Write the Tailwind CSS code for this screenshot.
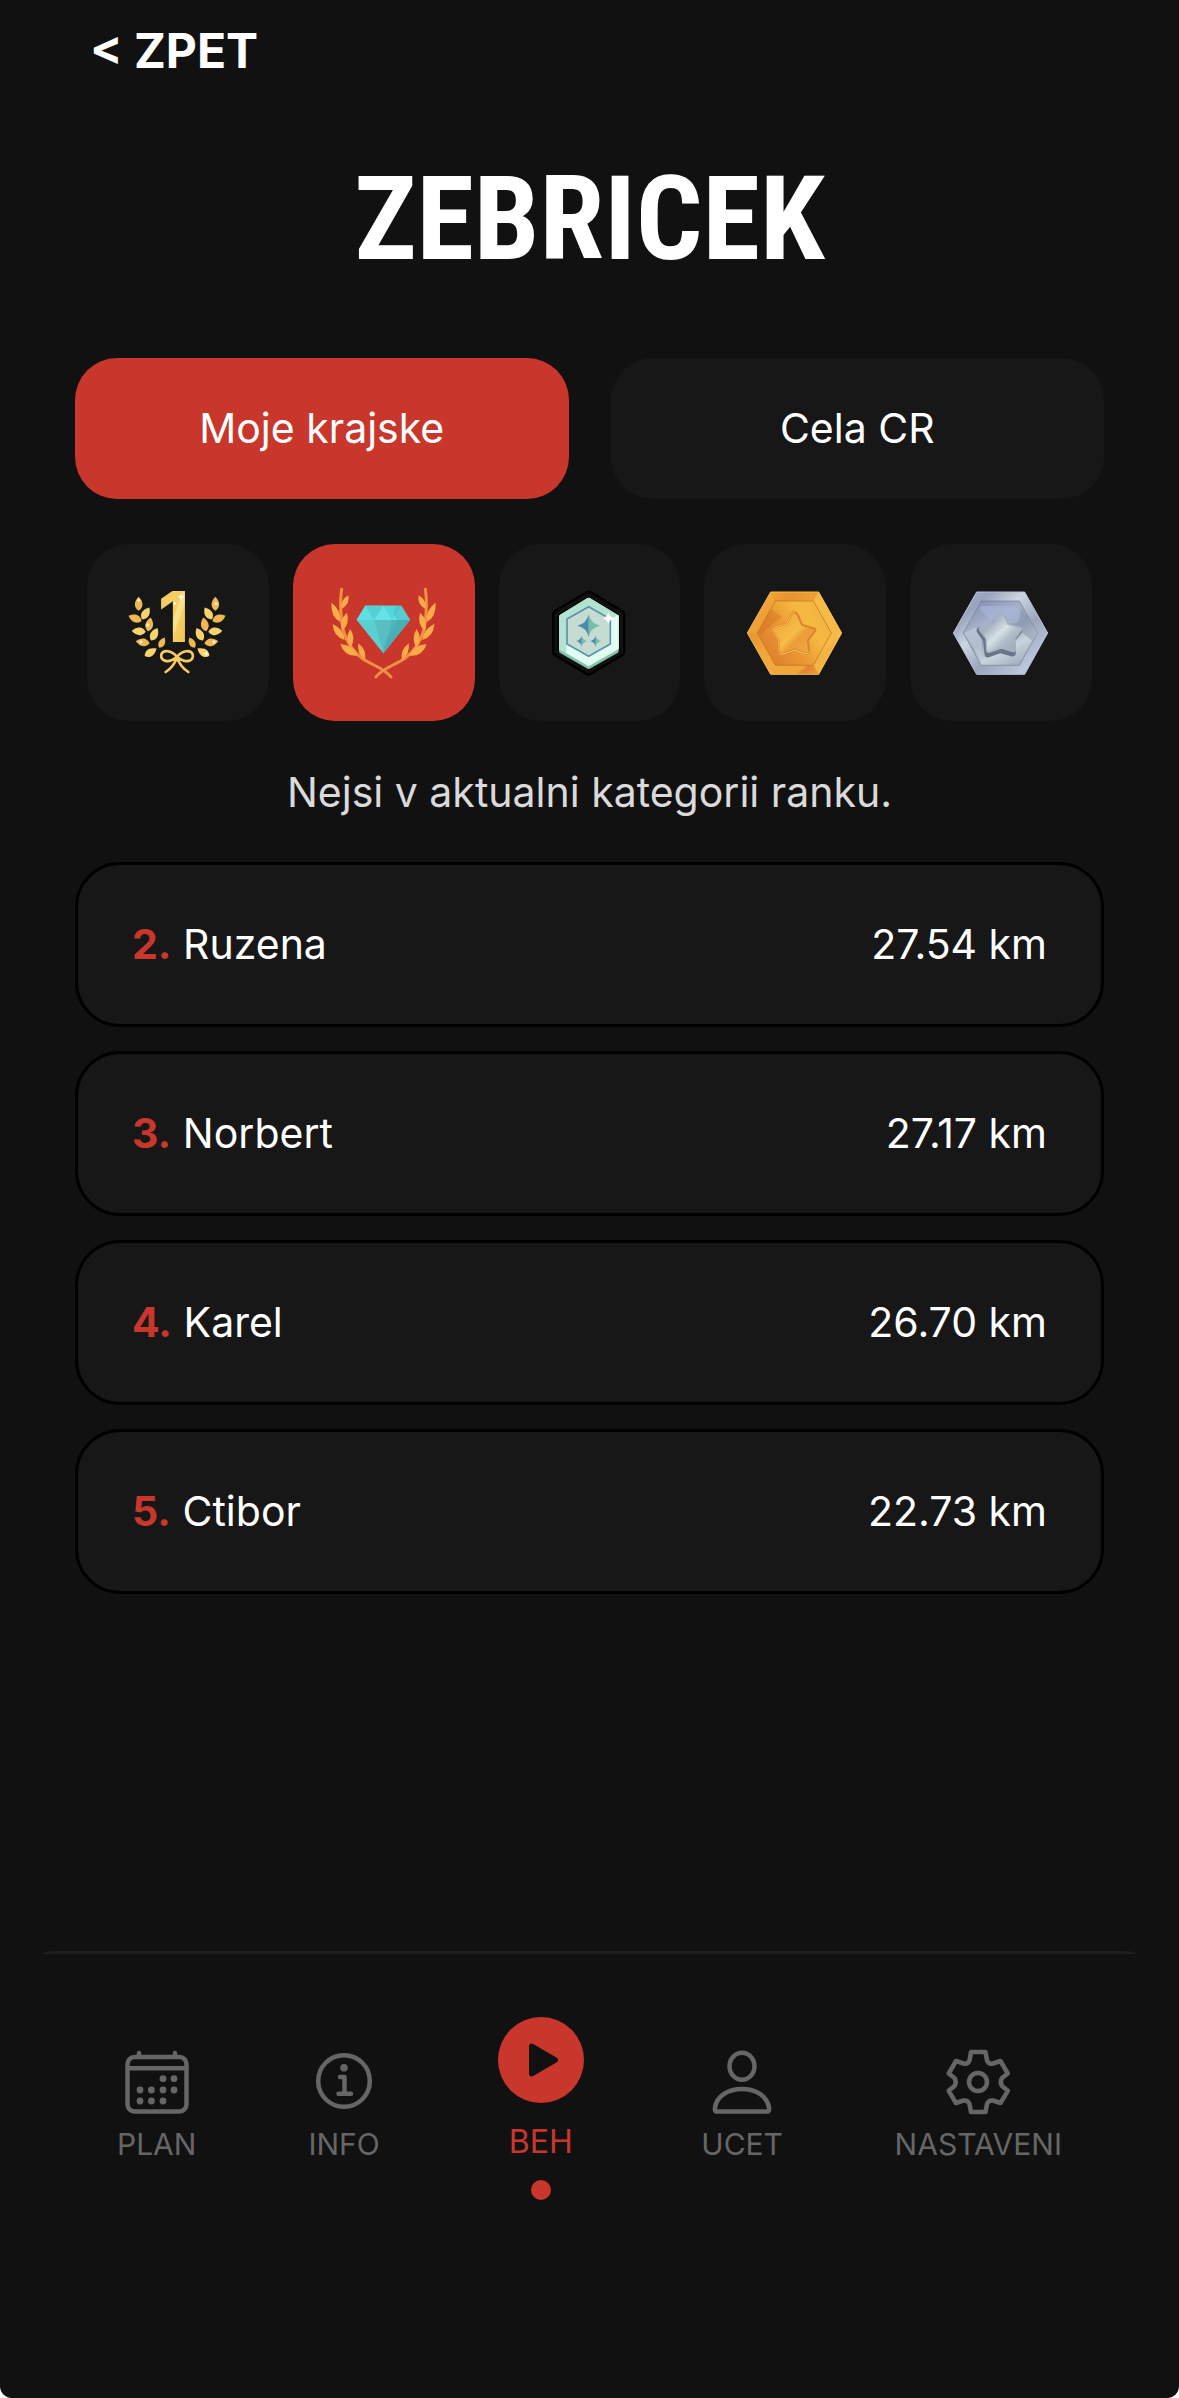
<!DOCTYPE html>
<html lang="cs">
<head>
<meta charset="utf-8">
<meta name="viewport" content="width=device-width, initial-scale=1">
<title>Zebricek</title>
<script src="https://cdn.jsdelivr.net/npm/@tailwindcss/browser@4"></script>
</head>
<body class="bg-white">
<div class="flex min-h-screen flex-col rounded-b-[12px] bg-[#111111] font-['Inter',sans-serif] text-[41px] text-white">

  <header class="flex px-[90px] pt-5">
    <a href="#" class="text-[48px] leading-[62px] font-bold">&lt; ZPET</a>
  </header>

  <main class="px-[75px]">
    <h1 class="mt-[77px] text-center font-['Roboto_Condensed','Liberation_Sans_Narrow','Liberation_Sans',sans-serif] text-[117px] leading-[120px] font-bold">ZEBRICEK</h1>

    <div class="mt-[79px] grid grid-cols-2 gap-[42px]">
      <button class="h-[141px] rounded-[42px] bg-[#c9372c]">Moje krajske</button>
      <button class="h-[141px] rounded-[42px] bg-[#171717]">Cela CR</button>
    </div>

    <div class="mt-[45px] grid grid-cols-5 gap-6 px-3">
      <button aria-label="Prvni misto" class="flex h-[177px] items-center justify-center rounded-[42px] bg-[#171717]">
        <svg class="size-[120px]" viewBox="54 37 360 360">
          <defs>
            <linearGradient id="one" x1="0" y1="0" x2="1" y2="1"><stop offset="0" stop-color="#f6c858"/><stop offset=".5" stop-color="#f5cf63"/><stop offset=".52" stop-color="#fbe08a"/><stop offset=".6" stop-color="#fbe08a"/><stop offset=".62" stop-color="#f5cf5c"/><stop offset="1" stop-color="#f0b850"/></linearGradient>
            <path id="leaf" d="M0-21C9-12 13-2 11 7C9 14 4 19 0 21C-4 19-9 14-11 7C-13-2-9-12 0-21Z"/>
            <path id="spark" d="M0-11Q1-1 11 0Q1 1 0 11Q-1 1-11 0Q-1-1 0-11Z" fill="#fff"/>
            <g id="twig">
              <use href="#leaf" fill="#f0b94f" transform="translate(116 129)"/>
              <use href="#leaf" fill="#f7d46b" transform="translate(137 158) rotate(32)"/>
              <use href="#leaf" fill="#f0b94f" transform="translate(105 173) rotate(-68)"/>
              <use href="#leaf" fill="#f0b94f" transform="translate(148 191) rotate(12)"/>
              <use href="#leaf" fill="#f7d46b" transform="translate(116 212) rotate(-86)"/>
              <use href="#leaf" fill="#f7d46b" transform="translate(163 221) rotate(27)"/>
              <use href="#leaf" fill="#f0b94f" transform="translate(128 245) rotate(-82)"/>
              <use href="#leaf" fill="#f0b94f" transform="translate(186 246) rotate(28) scale(.82)"/>
              <use href="#leaf" fill="#f7d46b" transform="translate(152 275) rotate(58)"/>
            </g>
          </defs>
          <use href="#twig"/>
          <use href="#twig" transform="translate(462 0) scale(-1 1)"/>
          <text x="220" y="245" text-anchor="middle" font-family="Inter, sans-serif" font-weight="800" font-size="210" fill="url(#one)">1</text>
          <path d="M231 288C213 268 190 267 184 281C180 302 205 310 231 288C257 310 283 302 278 281C272 267 249 268 231 288M231 290Q222 318 197 334M231 290Q240 318 265 334" fill="none" stroke="#f6cc62" stroke-width="8" stroke-linecap="round"/>
          <use href="#spark" transform="translate(243 109)"/>
          <use href="#spark" transform="translate(224 128) scale(.6)"/>
          <use href="#spark" transform="translate(116 119) scale(.6)"/>
          <use href="#spark" transform="translate(348 129) scale(.6)"/>
          <use href="#spark" transform="translate(143 193) scale(.6)"/>
          <use href="#spark" transform="translate(123 244) scale(.6)"/>
          <use href="#spark" transform="translate(342 244) scale(.6)"/>
          <use href="#spark" transform="translate(319 279) scale(.7)"/>
        </svg>
      </button>
      <button aria-label="Diamant" class="flex h-[177px] items-center justify-center rounded-[42px] bg-[#c9372c]">
        <svg class="size-[120px]" viewBox="42 37 360 360">
          <defs>
            <g id="branch">
              <path d="M95 86C90 115 91 150 96 190C103 232 125 270 160 296C190 314 228 326 243 349" fill="none" stroke="#f18f45" stroke-width="9" stroke-linecap="round"/>
              <path d="M64 126Q94 146 91 184Q62 170 64 126ZM68 190Q102 206 104 238Q70 228 68 190ZM91 250Q132 254 144 285Q104 290 91 250ZM115 104Q121 130 95 145Q90 118 115 104ZM111 156Q121 192 96 210Q86 178 111 156ZM121 205Q139 234 122 260Q102 234 121 205ZM145 248Q171 268 165 297Q140 280 145 248Z" fill="#fbab47"/>
            </g>
          </defs>
          <use href="#branch"/>
          <use href="#branch" transform="translate(441 0) scale(-1 1)"/>
          <path d="M166 135H274L300 178L220 278L140 178Z" fill="#5ad0d2"/>
          <path d="M166 135H220L192 178H140ZM220 135L246 178H192Z" fill="#66e3e6"/>
          <path d="M166 135L192 178H140Z" fill="#5fdfe0"/>
          <path d="M166 135H220L192 178Z" fill="#55cfd3"/>
          <path d="M220 135H274L246 178Z" fill="#55d6da"/>
          <path d="M274 135L300 178H246Z" fill="#62dfe2"/>
          <path d="M192 178H246L220 278Z" fill="#58bfc1"/>
          <path d="M246 178H300L220 278Z" fill="#4fb5bb"/>
          <path d="M258 135H274L300 178L220 278L225 240L262 178L250 160Z" fill="#3aa3b0" opacity=".3"/>
        </svg>
      </button>
      <button aria-label="Platina" class="flex h-[177px] items-center justify-center rounded-[42px] bg-[#171717]">
        <svg class="size-[120px]" viewBox="29 37 360 360">
          <g stroke-linejoin="round">
            <path d="M208 107L301 162V272L208 328L115 272V162Z" fill="#000" stroke="#000" stroke-width="34"/>
            <path d="M208 107L301 162V272L208 328L115 272V162Z" fill="#111" stroke="#111" stroke-width="20"/>
            <path d="M208 113L297 166V268L208 322L119 268V166Z" fill="#000" stroke="#000" stroke-width="10"/>
            <path d="M208 118L291 168V271L208 318L126 271V168Z" fill="#86c2ab" stroke="#86c2ab" stroke-width="14"/>
            <path d="M208 118L291 168V262L208 309L126 262V168Z" fill="#b3e2d1" stroke="#b3e2d1" stroke-width="14"/>
          </g>
          <path d="M298 162V264L208 316L140 276L142 250L208 288L274 250V176Z" fill="#e2fdf1"/>
          <path d="M208 138L273 175V250L208 287L143 250V175Z" fill="#c6dbd1" stroke="#5795aa" stroke-width="5"/>
          <path d="M208 161Q214 189 242 195Q214 201 208 229Z" fill="#75bea9"/>
          <path d="M208 161Q202 189 174 195Q202 201 208 229Z" fill="#488ca9"/>
          <path d="M187 225Q190 238 204 241Q190 244 187 258ZM229 225Q232 238 246 241Q232 244 229 258Z" fill="#75bea9"/>
          <path d="M187 225Q184 238 170 241Q184 244 187 258ZM229 225Q226 238 212 241Q226 244 229 258Z" fill="#488ca9"/>
          <path d="M267 154Q271 170 286 173Q271 176 267 190Q263 176 249 173Q263 170 267 154Z" fill="#fff"/>
        </svg>
      </button>
      <button aria-label="Zlato" class="flex h-[177px] items-center justify-center rounded-[42px] bg-[#171717]">
        <svg class="size-[120px]" viewBox="45 37 360 360">
          <defs>
            <linearGradient id="goldRim" x1="0" y1="0" x2="1" y2="1"><stop offset="0" stop-color="#f4b13a"/><stop offset=".25" stop-color="#e8932f"/><stop offset=".5" stop-color="#f3a93a"/><stop offset=".75" stop-color="#f0a63a"/><stop offset=".78" stop-color="#e38431"/><stop offset="1" stop-color="#f5bb45"/></linearGradient>
            <linearGradient id="goldFace" x1="0" y1=".8" x2="1" y2=".2"><stop offset="0" stop-color="#dc7a2c"/><stop offset=".4" stop-color="#ea9733"/><stop offset=".7" stop-color="#f5b942"/><stop offset="1" stop-color="#f2b240"/></linearGradient>
            <linearGradient id="goldStar" x1="0" y1="0" x2="1" y2="1"><stop offset="0" stop-color="#ee9f34"/><stop offset=".5" stop-color="#f6bd47"/><stop offset=".62" stop-color="#eb9c38"/><stop offset="1" stop-color="#f3ae3f"/></linearGradient>
          </defs>
          <path d="M152 94H296L365 217L296 341H152L82 217Z" fill="url(#goldRim)" stroke="#f6bd4a" stroke-width="3"/>
          <path d="M166 121L112 217L82 217L152 94Z" fill="#f3a93b" opacity=".6"/>
          <path d="M296 94L365 217L296 341L280 314L334 217L280 121Z" fill="#f8c44c" opacity=".7"/>
          <path d="M166 121H280L334 217L280 314H166L112 217Z" fill="url(#goldFace)" stroke="#b87627" stroke-width="2"/>
          <path d="M152 145L185 168L120 222L116 212Z" fill="#cd6726" opacity=".35"/>
          <path d="M223 155Q229 155 234 165L246 193L282 203Q290 207 284 213L264 238L267 273Q266 281 256 278L224 266L186 281Q178 282 178 273L176 238L157 210Q154 202 164 199L200 190L213 163Q218 155 223 155Z" fill="url(#goldStar)" stroke="#dc832e" stroke-width="6"/>
          <path d="M178 273L176 238L157 210Q154 202 164 199L200 190L213 163Q218 155 223 155" fill="none" stroke="#f8bd52" stroke-width="3"/>
          <path d="M178 276Q180 282 186 281L224 268L256 279Q266 280 266 273" fill="none" stroke="#fbc765" stroke-width="3"/>
        </svg>
      </button>
      <button aria-label="Stribro" class="flex h-[177px] items-center justify-center rounded-[42px] bg-[#171717]">
        <svg class="size-[120px]" viewBox="45 37 360 360">
          <defs>
            <linearGradient id="silverRim" x1="0" y1="0" x2="1" y2="1"><stop offset="0" stop-color="#aab4cf"/><stop offset=".2" stop-color="#98a3bd"/><stop offset=".38" stop-color="#ccd6e2"/><stop offset=".6" stop-color="#9ba6bd"/><stop offset=".85" stop-color="#bcc8dd"/><stop offset="1" stop-color="#8e99b4"/></linearGradient>
            <linearGradient id="silverFace" x1=".2" y1="0" x2=".8" y2="1"><stop offset="0" stop-color="#8792b0"/><stop offset=".3" stop-color="#a5b1cb"/><stop offset=".5" stop-color="#94a2b6"/><stop offset=".72" stop-color="#c9d5dc"/><stop offset="1" stop-color="#9da9bb"/></linearGradient>
            <linearGradient id="silverStar" x1="0" y1="0" x2="1" y2="1"><stop offset="0" stop-color="#97a5b8"/><stop offset=".3" stop-color="#a7b4c2"/><stop offset=".5" stop-color="#d6e2e6"/><stop offset=".65" stop-color="#b0bec8"/><stop offset="1" stop-color="#97a4b3"/></linearGradient>
          </defs>
          <path d="M152 94H296L365 217L296 341H152L82 217Z" fill="url(#silverRim)" stroke="#b8c3da" stroke-width="3"/>
          <path d="M166 121H280L334 217L280 314H166L112 217Z" fill="url(#silverFace)" stroke="#727d90" stroke-width="2"/>
          <path d="M166 136H272L296 180L246 190L224 155L205 187L160 145Z" fill="#a9b8dc" opacity=".6"/>
          <path d="M288 144L331 217L318 240L270 200Z" fill="#8492ad" opacity=".5"/>
          <path d="M114 217L150 200L168 235L166 300Z" fill="#c5d0da" opacity=".6"/>
          <path d="M223 158Q229 158 234 168L246 196L282 206Q290 210 284 216L264 241L267 278Q266 287 256 284L224 275L186 288Q178 288 178 279L174 241L155 213Q151 205 161 201L200 192L213 166Q218 158 223 158Z" fill="#69768a" stroke="#69768a" stroke-width="5"/>
          <path d="M223 155Q229 155 234 165L246 191L282 200Q290 204 284 211L267 234L268 268Q267 275 258 272L226 262L190 275Q182 276 182 268L180 234L161 208Q158 200 167 197L202 188L213 163Q218 155 223 155Z" fill="url(#silverStar)" stroke="#a7b3c3" stroke-width="4"/>
        </svg>
      </button>
    </div>

    <p class="mt-10 text-center leading-[62px] text-[#dadada]">Nejsi v aktualni kategorii ranku.</p>

    <ol class="mt-[39px] flex flex-col gap-6">
      <li class="flex h-[165px] items-center justify-between rounded-[45px] border-3 border-black bg-[#171717] px-[54px]"><span><b class="text-[#c9372c]">2.</b> Ruzena</span><span>27.54 km</span></li>
      <li class="flex h-[165px] items-center justify-between rounded-[45px] border-3 border-black bg-[#171717] px-[54px]"><span><b class="text-[#c9372c]">3.</b> Norbert</span><span>27.17 km</span></li>
      <li class="flex h-[165px] items-center justify-between rounded-[45px] border-3 border-black bg-[#171717] px-[54px]"><span><b class="text-[#c9372c]">4.</b> Karel</span><span>26.70 km</span></li>
      <li class="flex h-[165px] items-center justify-between rounded-[45px] border-3 border-black bg-[#171717] px-[54px]"><span><b class="text-[#c9372c]">5.</b> Ctibor</span><span>22.73 km</span></li>
    </ol>
  </main>

  <nav class="mt-auto px-[42px] pb-[198px] text-[30px] text-[#666666]">
    <div class="h-[3px] bg-[#1f1f1f] [border-radius:14px_14px_0_0/3px_3px_0_0]"></div>
    <div class="flex items-center justify-between px-[75px] pt-[63px]">
      <a href="#" class="flex flex-col items-center pb-0.5 leading-[52px]">
        <svg class="size-[72px]" viewBox="0 0 72 72" fill="none" stroke="currentColor" stroke-width="4.5" stroke-linecap="round">
          <rect x="6.5" y="11" width="59" height="54.5" rx="7"/><path d="M7 22.3H65M18 7V10M54 7V10"/>
          <g fill="currentColor" stroke="none"><circle cx="42" cy="32.7" r="3.4"/><circle cx="53" cy="32.7" r="3.4"/><circle cx="19" cy="44" r="3.4"/><circle cx="30.4" cy="44" r="3.4"/><circle cx="42" cy="44" r="3.4"/><circle cx="53" cy="44" r="3.4"/><circle cx="19" cy="55" r="3.4"/><circle cx="30.4" cy="55" r="3.4"/><circle cx="42" cy="55" r="3.4"/></g>
        </svg>
        PLAN
      </a>
      <a href="#" class="flex flex-col items-center pb-0.5 leading-[52px]">
        <svg class="size-[72px]" viewBox="0 0 72 72" fill="none" stroke="currentColor" stroke-width="4.5" stroke-linecap="round" stroke-linejoin="round">
          <circle cx="36" cy="35" r="25.8"/><circle cx="36" cy="21.8" r="3.8" fill="currentColor" stroke="none"/><path d="M32 31H36.5V47.7M30.5 47.7H43"/>
        </svg>
        INFO
      </a>
      <a href="#" aria-current="page" class="mx-1.5 flex flex-col items-center text-[32px] text-[#c9372c]">
        <svg class="size-[86px]" viewBox="0 0 86 86">
          <circle cx="43" cy="43" r="43" fill="#c9372c"/><path d="M33.5 29V57L57.5 43Z" fill="#111" stroke="#111" stroke-width="5" stroke-linejoin="round"/>
        </svg>
        <span class="my-4 leading-[45px]">BEH</span>
        <span class="size-5 rounded-full bg-[#c9372c]"></span>
      </a>
      <a href="#" class="flex flex-col items-center pb-0.5 leading-[52px]">
        <svg class="size-[72px]" viewBox="0 0 72 72" fill="none" stroke="currentColor" stroke-width="4.5" stroke-linejoin="round">
          <ellipse cx="36" cy="20.3" rx="12.5" ry="13.5"/><path d="M11 65.5C8.5 65.5 8.8 63 9 61.5C11 50 22 43 36 43S61 50 63 61.5C63.2 63 63.5 65.5 61 65.5Z"/>
        </svg>
        UCET
      </a>
      <a href="#" class="flex flex-col items-center pb-0.5 leading-[52px]">
        <svg class="size-[72px]" viewBox="0 0 72 72" fill="none" stroke="currentColor" stroke-width="4.5" stroke-linejoin="round">
          <path d="M29 6H43.5L45 14.5Q46.5 18.5 51 17.5L58.5 15L65.8 27.5L60 32Q57.5 36 60 40L65.8 44.8L58.5 57L51 54.5Q46.5 54 45 58L43.5 66H29L27.5 58Q26 54 21.5 54.5L14 57L6.7 44.8L12.5 40Q15 36 12.5 32L6.7 27.5L14 15L21.5 17.5Q26 18.5 27.5 14.5Z"/><circle cx="36" cy="36" r="9"/>
        </svg>
        NASTAVENI
      </a>
    </div>
  </nav>
</div>
</body>
</html>
